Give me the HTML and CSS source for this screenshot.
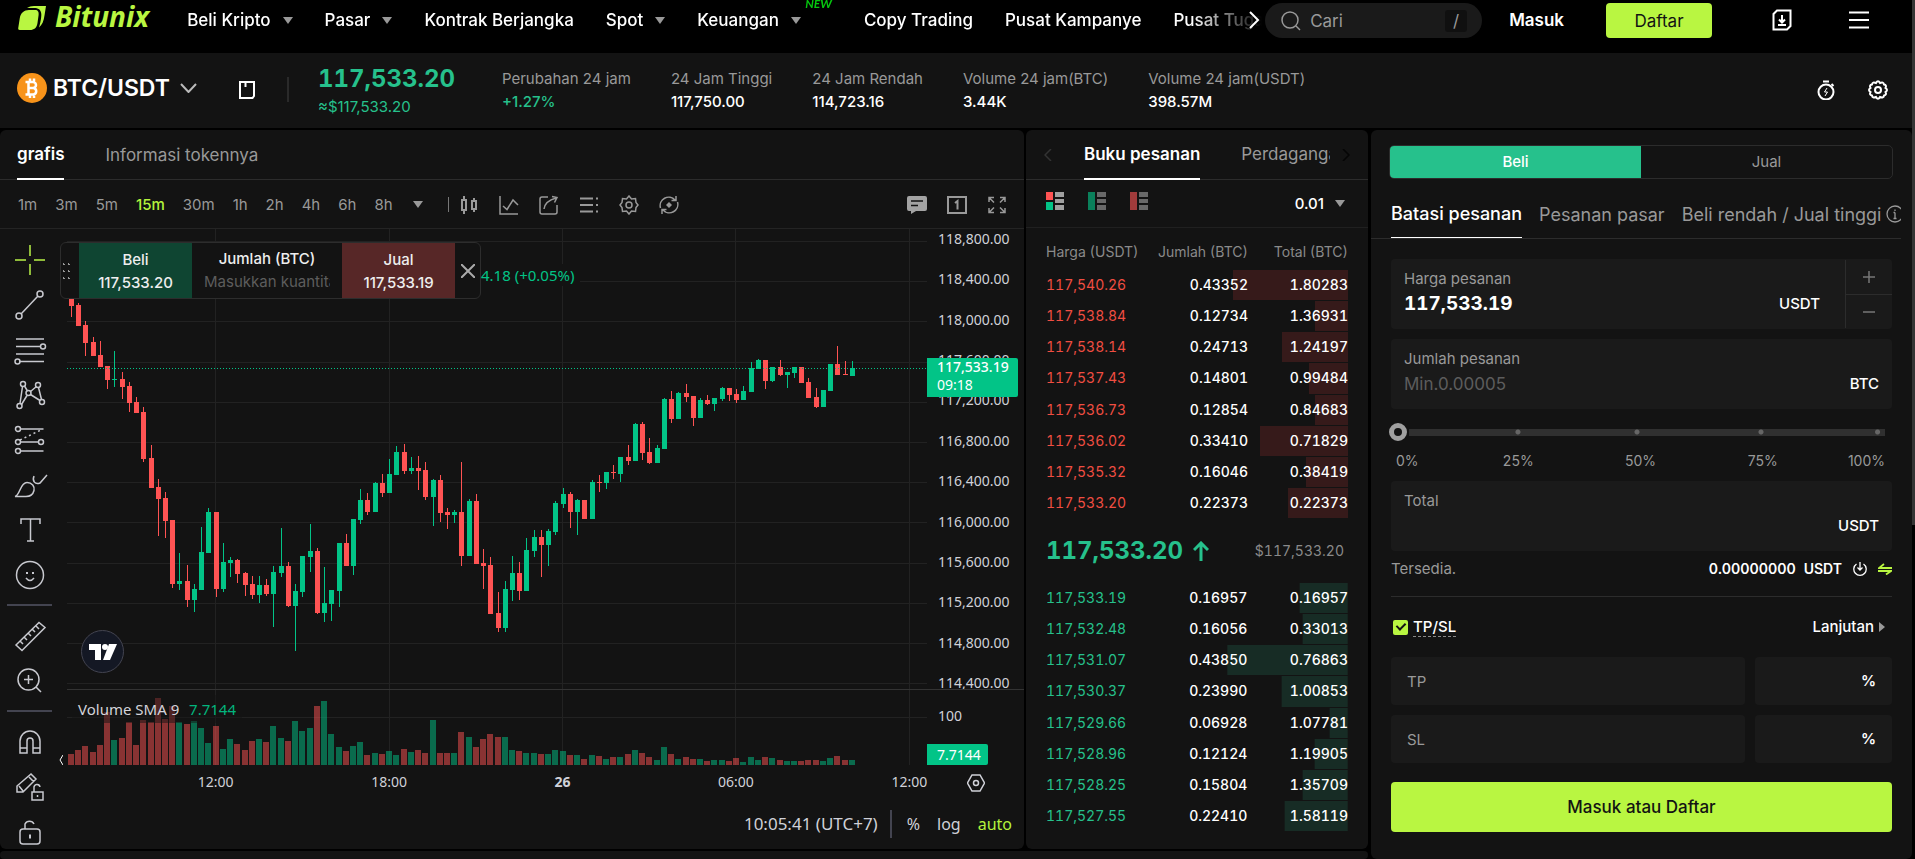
FILE: index.html
```html
<!DOCTYPE html>
<html lang="id">
<head>
<meta charset="utf-8">
<meta name="viewport" content="width=device-width, initial-scale=1">
<title>BTC/USDT | Bitunix</title>
<link rel="stylesheet" href="styles.css">
</head>
<body>
<header class="topbar">
  <a class="brand" href="#">
    <svg class="brand-mark" viewBox="0 0 28 24" width="28" height="24"><path d="M2 24C0 24 0 23 .4 21L1.800 12C2.600 7 6 4 11 4H17C20 4 21 6 20.600 9L19.500 17C18.700 22 16 24 12 24Z"/><path d="M9 2C11 .7 13 0 16 0H28L26.500 9.500C25.800 15 24 19 21 21.500C22.300 18 23.500 11 23.300 8C23 3.500 20 2 16 2Z"/></svg>
    <span>Bitunix</span>
  </a>
  <nav class="nav">
    <a href="#">Beli Kripto <i class="caret"></i></a>
    <a href="#">Pasar <i class="caret"></i></a>
    <a href="#">Kontrak Berjangka</a>
    <a href="#">Spot <i class="caret"></i></a>
    <a href="#" class="has-new">Keuangan <i class="caret"></i><em class="new">NEW</em></a>
    <a href="#">Copy Trading</a>
    <a href="#">Pusat Kampanye</a>
    <a href="#">Pusat Tugas</a>
  </nav>
  <button class="nav-next" aria-label="Berikutnya"><svg viewBox="0 0 12 18" width="12" height="18"><path d="M2 1l8 8-8 8"/></svg></button>
  <label class="search">
    <svg viewBox="0 0 20 20" width="20" height="20"><circle cx="9" cy="9" r="8"/><path d="M15 15l4 4"/></svg>
    <input type="text" placeholder="Cari" aria-label="Cari">
    <kbd>/</kbd>
  </label>
  <a class="login" href="#">Masuk</a>
  <button class="signup">Daftar</button>
  <button class="icon-btn app-btn" aria-label="Unduh aplikasi"><svg viewBox="0 0 20 22" width="20" height="22"><path class="heavy" d="M5 1.500H18.500V17L15 20.500H1.500V5Z"/><path class="heavy" d="M10 6v7M7 10.500l3 3 3-3M6 16h8"/></svg></button>
  <button class="icon-btn menu-btn" aria-label="Menu"><svg viewBox="0 0 20 18" width="20" height="18"><path class="heavy" d="M0 1.500h20M0 9h20M0 16.500h20"/></svg></button>
</header>

<section class="ticker">
  <button class="pair">
    <svg viewBox="0 0 30 30" width="30" height="30"><circle cx="15" cy="15" r="15" fill="#f7931a"/><path fill="none" stroke="#fff" stroke-width="2.500" d="M8.500 9H16a3 3 0 0 1 0 6H11.500 16.500a3.300 3.300 0 0 1 0 6.500H8.500M11.500 9v12.500M13 5.500V9M17 5.500V9M13 21.500V25M17 21.500V25"/></svg>
    <strong>BTC/USDT</strong>
    <svg class="chev" viewBox="0 0 17 10" width="17" height="10"><path d="M1 1l7.500 8L16 1"/></svg>
  </button>
  <button class="icon-btn guide" aria-label="Panduan"><svg viewBox="0 0 16 18" width="16" height="18"><path class="heavy" d="M1 1H15V15L13.500 17H1ZM6.500 1V6"/></svg></button>
  <div class="last">
    <b>117,533.20</b>
    <span>≈$117,533.20</span>
  </div>
  <dl class="stats">
    <div><dt>Perubahan 24 jam</dt><dd class="up">+1.27%</dd></div>
    <div><dt>24 Jam Tinggi</dt><dd>117,750.00</dd></div>
    <div><dt>24 Jam Rendah</dt><dd>114,723.16</dd></div>
    <div><dt>Volume 24 jam(BTC)</dt><dd>3.44K</dd></div>
    <div><dt>Volume 24 jam(USDT)</dt><dd>398.57M</dd></div>
  </dl>
  <div class="ticker-tools">
    <button class="icon-btn" aria-label="Waktu"><svg viewBox="0 0 20 20" width="20" height="20"><circle class="heavy" cx="10" cy="12" r="7.500"/><path class="heavy" d="M7 1.500h6M15.500 4l2 2"/><path d="M11 8l-2.500 4h3L9 16"/></svg></button>
    <button class="icon-btn" aria-label="Pengaturan"><svg viewBox="0 0 20 20" width="20" height="20"><path class="heavy" d="M8 3q2-3.500 4 0q3.500-1.500 4 1.500q3 .5 1.500 3.500q3 2 0 4q1.500 3-1.500 3.500q-.5 3-4 1.500q-2 3.500-4 0q-3.500 1.500-4-1.500q-3-.5-1.500-3.500q-3-2 0-4q-1.500-3 1.500-3.500q.5-3 4-1.500Z"/><circle class="heavy" cx="10" cy="10" r="3"/></svg></button>
  </div>
</section>

<main class="desk">
  <div class="left">
    <section class="panel chart">
      <div class="tabs chart-tabs"><button class="tab on">grafis</button><button class="tab">Informasi tokennya</button></div>
      <div class="chart-bar">
        <div class="frames">
          <button>1m</button><button>3m</button><button>5m</button><button class="on">15m</button><button>30m</button><button>1h</button><button>2h</button><button>4h</button><button>6h</button><button>8h</button>
        </div>
        <i class="caret"></i>
        <i class="rule"></i>
        <div class="tools">
          <button aria-label="Jenis grafik"><svg viewBox="0 0 20 20" width="20" height="20"><path class="thick" d="M5 1v4M5 15v4M15 3v3M15 14v3M3 5h4v10H3zM13 6h4v8h-4z"/></svg></button>
          <button aria-label="Indikator"><svg viewBox="0 0 20 20" width="20" height="20"><path d="M1 1v18h18M4 11l4 3.500 6-9.500 5 5"/></svg></button>
          <button aria-label="Bagikan"><svg viewBox="0 0 20 20" width="20" height="20"><path d="M9 2H3q-2 0-2 2v13q0 2 2 2h13q2 0 2-2v-7M5 14Q6 6 17 3M13 1.500l5 1-2.500 5"/></svg></button>
          <button aria-label="Daftar indikator"><svg viewBox="0 0 20 20" width="20" height="20"><path class="thick" d="M1 3.500h13M1 10h13M1 16.500h13M17 3.500h2M17 10h2M17 16.500h2"/></svg></button>
          <button aria-label="Setelan grafik"><svg viewBox="0 0 20 20" width="20" height="20"><path d="M10 1l2.500 3 4-.5 .5 4 2 2.500-2 2.500-.5 4-4-.5L10 19l-2.500-3-4 .5-.5-4L1 10l2-2.500.5-4 4 .5Z"/><circle cx="10" cy="10" r="3"/></svg></button>
          <button aria-label="Muat ulang"><svg viewBox="0 0 20 20" width="20" height="20"><path d="M1.500 13A8.500 8.500 0 0 1 16 5M17 1v4.500h-4.500M18.500 7A8.500 8.500 0 0 1 4 15M3 19v-4.500h4.500"/><path fill="currentColor" stroke="none" d="M10 7l3 3-3 3L7 10Z"/></svg></button>
        </div>
        <div class="tools end">
          <button aria-label="Komentar"><svg viewBox="0 0 20 20" width="20" height="20"><path class="bubble" d="M2 1h16q2 0 2 2v11q0 2-2 2H9l-5 3v-3H2q-2 0-2-2V3q0-2 2-2Z"/><path class="bubble-text" d="M4 6h12M4 10.500h7"/></svg></button>
          <button aria-label="Tata letak"><svg viewBox="0 0 20 20" width="20" height="20"><path class="thick" d="M1 8V2h18v6M1 12v6h18v-6M1 7v6M19 7v6M8 8l2.500-2v8.500"/></svg></button>
          <button aria-label="Layar penuh"><svg viewBox="0 0 20 20" width="20" height="20"><path d="M2 7V2.500h5M13 2.500h5V7M18 13v4.500h-5M7 17.500H2V13M2 2.500l5 5M18 2.500l-5 5M18 17.500l-5-5M2 17.500l5-5"/></svg></button>
        </div>
      </div>
      <div class="chart-body">
        <div class="draw">
          <button class="on" aria-label="Kursor"><svg viewBox="0 0 30 30" width="30" height="30"><path class="thick" d="M15 0v11M15 19v11M0 15h11M19 15h11"/></svg></button>
          <button aria-label="Garis"><svg viewBox="0 0 30 30" width="30" height="30"><circle cx="4" cy="26" r="3"/><circle cx="25" cy="4" r="3"/><path d="M6 24L23 6"/></svg></button>
          <button aria-label="Fibonacci"><svg viewBox="0 0 30 30" width="30" height="30"><path d="M1 4h28M1 11.500h24M1 19h28M4 26.500h25"/><circle cx="28" cy="11.500" r="2.500"/><circle cx="2.500" cy="26.500" r="2.500"/></svg></button>
          <button aria-label="Pola"><svg viewBox="0 0 30 30" width="30" height="30"><path d="M5 23.500L7.500 6.500M9.500 6l3 5M15.500 11.500l6-5M23.500 7.500l3 12M6.500 24.500l5.500-9M15.500 14.500l9.500 6"/><circle cx="4.500" cy="26" r="2.500"/><circle cx="8" cy="4" r="2.500"/><circle cx="13.500" cy="13" r="2.500"/><circle cx="23" cy="5" r="2.500"/><circle cx="27" cy="22" r="2.500"/></svg></button>
          <button aria-label="Proyeksi"><svg viewBox="0 0 30 30" width="30" height="30"><path d="M5.500 4h23M5.500 17h18M5.500 26h23"/><path stroke-dasharray="2 3" d="M5 15L26 5"/><circle cx="3" cy="4" r="2.500"/><circle cx="3" cy="17" r="2.500"/><circle cx="26" cy="17" r="2.500"/><circle cx="3" cy="26" r="2.500"/></svg></button>
          <button aria-label="Kuas"><svg viewBox="0 0 30 30" width="30" height="30"><path d="M0 26.500c5-1 5-14 12-14 5 0 8 4 7 8-1 4-4 6-8 6ZM19 6c-2 5 1 9 6 7l7-8"/></svg></button>
          <button aria-label="Teks"><svg viewBox="0 0 30 30" width="30" height="30"><path d="M6 9V4h19v5M15.500 4v22M12 26h7"/></svg></button>
          <button aria-label="Emoji"><svg viewBox="0 0 30 30" width="30" height="30"><circle cx="15" cy="15" r="13.500"/><path d="M11 18q4 5 8 0"/><path class="thick" d="M11 13h2M17 13h2"/></svg></button>
          <hr>
          <button aria-label="Penggaris"><svg viewBox="0 0 30 30" width="30" height="30"><path d="M1 24L24 1.500l6 5L7 29.500ZM5 20l3 3M9 16l3 3M13 12l3 3M17 8l3 3M21 5l3 3"/></svg></button>
          <button aria-label="Perbesar"><svg viewBox="0 0 30 30" width="30" height="30"><circle cx="13.500" cy="13.500" r="10.500"/><path d="M21 21l5 5M9 13.500h9M13.500 9v9"/></svg></button>
          <hr>
          <button aria-label="Magnet"><svg viewBox="0 0 30 30" width="30" height="30"><path d="M5 26V14a10 10 0 0 1 20 0V26H18V14a3 3 0 0 0-6 0V26ZM5 21h7M18 21h7"/></svg></button>
          <button aria-label="Mode gambar"><svg viewBox="0 0 30 30" width="30" height="30"><path d="M2 20v-6L16 2l5 5L8 20ZM4 14l4 5M14 5l5 5M17 20h11v8H17ZM19 20v-4a3 3 0 0 1 6-1M22.500 23v2"/></svg></button>
          <button aria-label="Kunci"><svg viewBox="0 0 30 30" width="30" height="30"><rect x="5" y="12" width="20" height="15" rx="3"/><path d="M10 12V7a5 5 0 0 1 9 0"/><path class="thick" d="M15 17.500v4"/></svg></button>
        </div>
        <div class="plot-area">
          <svg class="plot" id="plot" viewBox="0 0 860 1608" preserveAspectRatio="none"></svg>
          <form class="quick">
            <i class="grip"></i>
            <button type="button" class="q-buy">Beli<br>117,533.20</button>
            <label class="q-qty">Jumlah (BTC)<input type="text" placeholder="Masukkan kuantitas"></label>
            <button type="button" class="q-sell">Jual<br>117,533.19</button>
            <button type="button" class="q-close" aria-label="Tutup"><svg viewBox="0 0 14 14" width="14" height="14"><path d="M0 0l14 14M14 0L0 14"/></svg></button>
          </form>
          <span class="change">4.18 (+0.05%)</span>
          <a class="tv" href="#" aria-label="TradingView"><svg viewBox="0 0 28 16" width="28" height="16"><path d="M0 0h12v16H6V6H0ZM20 0h8l-7 16h-7Z"/><circle cx="16" cy="3" r="3"/></svg></a>
          <div class="vol-legend">Volume SMA 9 <span>7.7144</span></div>
          <svg class="fold" viewBox="0 0 4 10" width="4" height="10"><path d="M4 0L1 5l3 5"/></svg>
        </div>
        <div class="prices">
          <ul><li>118,800.00</li><li>118,400.00</li><li>118,000.00</li><li>117,600.00</li><li>117,200.00</li><li>116,800.00</li><li>116,400.00</li><li>116,000.00</li><li>115,600.00</li><li>115,200.00</li><li>114,800.00</li><li>114,400.00</li></ul>
          <div class="vol-scale">100</div>
          <div class="price-tag"><b>117,533.19</b><span>09:18</span></div>
          <div class="vol-tag">7.7144</div>
        </div>
      </div>
      <div class="times">
        <span>12:00</span><span>18:00</span><b>26</b><span>06:00</span><span>12:00</span>
        <svg class="axis-gear" viewBox="0 0 18 18" width="18" height="18"><path d="M5 1h8l4.500 8L13 17H5L.5 9Z"/><circle cx="9" cy="9" r="2.500"/></svg>
      </div>
      <div class="chart-foot">
        <span>10:05:41 (UTC+7)</span><i></i><button>%</button><button>log</button><button class="on">auto</button>
      </div>
    </section>

    <section class="panel book">
      <div class="tabs book-tabs">
        <svg class="arrow dim" viewBox="0 0 8 12" width="8" height="12"><path d="M7 0L1 6l6 6"/></svg>
        <button class="tab on">Buku pesanan</button>
        <button class="tab cut">Perdagangan</button>
        <svg class="arrow" viewBox="0 0 8 12" width="8" height="12"><path d="M1 0l6 6-6 6"/></svg>
      </div>
      <div class="book-bar">
        <button aria-label="Semua"><svg viewBox="0 0 18 18" width="18" height="18"><path fill="#ff5353" d="M0 0h7v8H0z"/><path fill="#02c487" d="M0 10h7v8H0z"/><path fill="#a0a0a0" d="M9 0h9v5H9zM9 7h9v4H9zM9 13h9v5H9z"/></svg></button>
        <button aria-label="Beli"><svg viewBox="0 0 18 18" width="18" height="18"><path fill="#0a805b" d="M0 0h7v18H0z"/><path fill="#696969" d="M9 0h9v5H9zM9 7h9v4H9zM9 13h9v5H9z"/></svg></button>
        <button aria-label="Jual"><svg viewBox="0 0 18 18" width="18" height="18"><path fill="#a13b3b" d="M0 0h7v18H0z"/><path fill="#696969" d="M9 0h9v5H9zM9 7h9v4H9zM9 13h9v5H9z"/></svg></button>
        <button class="step">0.01 <i class="caret"></i></button>
      </div>
      <table class="orders asks">
        <thead><tr><th>Harga (USDT)</th><th>Jumlah (BTC)</th><th>Total (BTC)</th></tr></thead>
        <tbody>
          <tr style="--depth:38%"><td>117,540.26</td><td>0.43352</td><td>1.80283</td></tr>
          <tr style="--depth:11%"><td>117,538.84</td><td>0.12734</td><td>1.36931</td></tr>
          <tr style="--depth:22%"><td>117,538.14</td><td>0.24713</td><td>1.24197</td></tr>
          <tr style="--depth:13%"><td>117,537.43</td><td>0.14801</td><td>0.99484</td></tr>
          <tr style="--depth:11%"><td>117,536.73</td><td>0.12854</td><td>0.84683</td></tr>
          <tr style="--depth:29%"><td>117,536.02</td><td>0.33410</td><td>0.71829</td></tr>
          <tr style="--depth:14%"><td>117,535.32</td><td>0.16046</td><td>0.38419</td></tr>
          <tr style="--depth:20%"><td>117,533.20</td><td>0.22373</td><td>0.22373</td></tr>
        </tbody>
      </table>
      <div class="mid"><b>117,533.20</b><svg viewBox="0 0 16 20" width="16" height="20"><path d="M8 20V2M1 9l7-7 7 7"/></svg><span>$117,533.20</span></div>
      <table class="orders bids">
        <tbody>
          <tr style="--depth:16%"><td>117,533.19</td><td>0.16957</td><td>0.16957</td></tr>
          <tr style="--depth:15%"><td>117,532.48</td><td>0.16056</td><td>0.33013</td></tr>
          <tr style="--depth:40%"><td>117,531.07</td><td>0.43850</td><td>0.76863</td></tr>
          <tr style="--depth:22%"><td>117,530.37</td><td>0.23990</td><td>1.00853</td></tr>
          <tr style="--depth:6%"><td>117,529.66</td><td>0.06928</td><td>1.07781</td></tr>
          <tr style="--depth:11%"><td>117,528.96</td><td>0.12124</td><td>1.19905</td></tr>
          <tr style="--depth:15%"><td>117,528.25</td><td>0.15804</td><td>1.35709</td></tr>
          <tr style="--depth:21%"><td>117,527.55</td><td>0.22410</td><td>1.58119</td></tr>
        </tbody>
      </table>
    </section>
    <section class="panel history"></section>
  </div>

  <form class="panel trade">
    <div class="side"><button type="button" class="on">Beli</button><button type="button">Jual</button></div>
    <div class="tabs type-tabs">
      <button type="button" class="tab on">Batasi pesanan</button><button type="button" class="tab">Pesanan pasar</button><button type="button" class="tab">Beli rendah / Jual tinggi</button>
      <svg viewBox="0 0 18 18" width="18" height="18"><circle cx="9" cy="9" r="8"/><path d="M9 4.500v1.500M9 7.500v6M7.500 13.500h3M7.500 7.500H9"/></svg>
    </div>
    <div class="field">
      <label for="price">Harga pesanan</label>
      <div class="line"><input id="price" class="big" type="text" value="117,533.19"><span>USDT</span></div>
      <div class="stepper"><button type="button" aria-label="Tambah"><svg viewBox="0 0 12 12" width="12" height="12"><path d="M6 0v12M0 6h12"/></svg></button><button type="button" aria-label="Kurangi"><svg viewBox="0 0 12 12" width="12" height="12"><path d="M0 6h12"/></svg></button></div>
    </div>
    <div class="field">
      <label for="qty">Jumlah pesanan</label>
      <div class="line"><input id="qty" type="text" placeholder="Min.0.00005"><span>BTC</span></div>
    </div>
    <div class="slide">
      <input type="range" min="0" max="100" value="0" aria-label="Persentase">
      <div class="marks"><span>0%</span><span>25%</span><span>50%</span><span>75%</span><span>100%</span></div>
    </div>
    <div class="field">
      <label for="total">Total</label>
      <div class="line"><input id="total" type="text"><span>USDT</span></div>
    </div>
    <div class="avail">
      <span>Tersedia.</span>
      <b>0.00000000</b><b>USDT</b>
      <svg viewBox="0 0 14 14" width="14" height="14"><path d="M3.500 2A6.200 6.200 0 1 0 10.500 2M7 0v8M4.500 5.500L7 8l2.500-2.500"/></svg>
      <svg class="swap" viewBox="0 0 14 12" width="14" height="12"><path d="M14 5H1L6 1M0 8h13L8 11.500"/></svg>
    </div>
    <div class="tpsl">
      <label><input type="checkbox" checked><span>TP/SL</span></label>
      <button type="button">Lanjutan <i></i></button>
    </div>
    <div class="pairline"><input class="box" type="text" placeholder="TP" aria-label="TP"><label class="box pct"><input type="text" aria-label="TP persen">%</label></div>
    <div class="pairline"><input class="box" type="text" placeholder="SL" aria-label="SL"><label class="box pct"><input type="text" aria-label="SL persen">%</label></div>
    <button type="button" class="submit">Masuk atau Daftar</button>
  </form>
</main>
<div class="scroll-thumb"></div>
<script src="chart.js"></script>
</body>
</html>
```
FILE: styles.css
```css
* { box-sizing: border-box; }
body {
  margin: 0;
  height: 100vh;
  overflow: hidden;
  display: flex;
  flex-direction: column;
  background: #000;
  color: #fff;
  font: 400 14px/20px Inter, "Liberation Sans", sans-serif;
}
button, input { font: inherit; color: inherit; border: 0; background: none; padding: 0; margin: 0; outline: 0; }
button { cursor: pointer; white-space: nowrap; }
a { color: inherit; text-decoration: none; }
svg { display: block; flex: none; fill: none; stroke: currentColor; }
ul, dl, dd { margin: 0; padding: 0; list-style: none; }
.caret { display: inline-block; border: 5px solid transparent; border-top: 7px solid #999; border-bottom: 0; }
.heavy, .thick { stroke-width: 2; }
.icon-btn { display: flex; }

/* top bar */
.topbar { flex: none; height: 53px; display: flex; align-items: flex-start; padding: 3px 46px 0 18px; }
.brand { display: flex; align-items: center; gap: 9px; margin: -2px 38px 0 0; color: #b9f641; font: italic 700 28px/30px "Open Sans", sans-serif; }
.brand-mark { fill: #b9f641; stroke: none; margin-top: 3px; }
.nav {
  flex: 1; min-width: 0; display: flex; gap: 32px; height: 50px; margin-top: -3px; padding-top: 3px; overflow: hidden;
  font-size: 17px; font-weight: 500; line-height: 34px; white-space: nowrap;
  -webkit-mask-image: linear-gradient(to left, transparent, #000 70px);
  mask-image: linear-gradient(to left, transparent, #000 70px);
}
.nav a { display: flex; align-items: center; gap: 12px; height: 34px; position: relative; }
.has-new { padding-right: 31px; }
.new { position: absolute; right: 0; top: -5px; color: #05c70e; font: italic 700 12px/12px Lato, sans-serif; }
.nav-next { margin: 8px 5px 0 -14px; z-index: 1; }
.nav-next svg { stroke-width: 2; }
.search { width: 217px; height: 35px; display: flex; align-items: center; gap: 9px; padding: 0 15px 0 16px; border-radius: 18px; background: #1a1a1a; color: #999; font-size: 17px; }
.search input { flex: 1; min-width: 0; }
.search svg { stroke-width: 1.5; }
::placeholder { color: #999; opacity: 1; }
.search kbd { width: 22px; border-radius: 3px; background: #101010; text-align: center; font: 17px/22px Inter, sans-serif; }
.login { margin-left: 27px; font-size: 17px; font-weight: 600; line-height: 34px; }
.signup { width: 106px; height: 35px; margin-left: 42px; border-radius: 4px; background: #b9f641; color: #131313; font-size: 17px; }
.app-btn { margin: 6px 0 0 60px; }
.menu-btn { margin: 8px 0 0 57px; }

/* ticker */
.ticker { flex: none; height: 75px; margin-right: 3px; background: #131313; display: flex; align-items: center; padding: 0 24px 0 17px; }
.pair { display: flex; align-items: center; gap: 6px; margin-bottom: 6px; }
.pair > svg:first-child { stroke: none; }
.pair strong { font-size: 23px; font-weight: 600; line-height: 30px; }
.chev { margin-left: 4px; stroke-width: 2; color: #bbb; }
.guide { margin: 0 0 2px 42px; padding-right: 32px; }
.last { display: flex; flex-direction: column; padding-left: 31px; color: #26c18c; position: relative; }
.last::before { content: ""; position: absolute; left: 0; top: 14px; width: 2px; height: 25px; background: #2a2a2a; }
.last b, .mid b { font-size: 24px; line-height: 32px; font-weight: 700; font-variant-numeric: tabular-nums; }
.last span { font-size: 15px; line-height: 23px; }
.stats { display: flex; gap: 40px; margin-left: 47px; padding-bottom: 2px; white-space: nowrap; }
.stats dt { color: #999; font-size: 15px; line-height: 23px; }
.stats dd { font-size: 15px; line-height: 23px; font-weight: 500; }
.stats .up { color: #26c18c; }
.ticker-tools { display: flex; gap: 32px; margin: 0 0 1px auto; }

/* layout */
.desk { flex: 1; min-height: 0; display: grid; grid-template-columns: minmax(0, 1fr) 541px; gap: 3px; margin: 2px 3px 0 0; }
.left { display: grid; grid-template: 719px 1fr / minmax(0, 1fr) 342px; gap: 2px; min-height: 0; }
.panel { background: #131313; border-radius: 6px; min-width: 0; }
.history { grid-column: 1 / -1; }
.tabs { display: flex; border-bottom: 1px solid #2c2c2c; height: 50px; font-size: 17px; }
.tab { height: 50px; color: #999; padding-bottom: 1px; }
.tab.on { color: #fff; font-weight: 600; padding-bottom: 0; border-bottom: 2px solid #fff; }

/* chart */
.chart { display: flex; flex-direction: column; overflow: hidden; }
.chart-tabs { flex: none; gap: 41px; padding-left: 17px; }
.chart-bar { flex: none; height: 49px; display: flex; align-items: center; padding: 1px 17px 0 18px; border-bottom: 1px solid #242424; color: #999; font-size: 15px; }
.frames { display: flex; gap: 18px; }
.frames .on, .chart-foot .on { color: #b4f23c; }
.frames .on { font-weight: 500; }
.chart-bar > .caret { margin-left: 20px; }
.rule { width: 1px; height: 15px; background: #777; margin: 0 10px 0 25px; }
.tools { display: flex; gap: 20px; }
.tools.end { margin-left: auto; }
.tools svg { stroke-width: 1.5; }
.bubble { fill: #a3a3a3; stroke: none; }
.bubble-text { stroke: #131313; }
.chart-body { flex: none; display: grid; grid-template: 536px / 67px minmax(0, 1fr) 97px; font-family: "Noto Sans", sans-serif; }
.draw { padding: 8px 0 0 7px; width: 53px; display: flex; flex-direction: column; color: #c8c9cf; }
.draw button { flex: none; height: 45px; display: flex; align-items: center; justify-content: center; }
.draw svg { stroke-width: 1.5; overflow: visible; }
.draw .on { color: #8fbb3a; }
.draw hr { flex: none; width: 45px; margin: 7px 0; border: 0; border-top: 2px solid #434450; }
.plot-area { position: relative; min-width: 0; }
.plot { width: 100%; height: 536px; shape-rendering: crispEdges; stroke: none; }
.plot .grid { fill: #222; }
.plot .up { fill: #02c487; }
.plot .down { fill: #ff5353; }
.plot .vol { opacity: .5; }
.plot .sep { fill: #333; }
.plot .now { stroke: #02c487; stroke-dasharray: 1 2; stroke-width: 3; }
.quick { position: absolute; left: -7px; top: 13px; height: 57px; display: flex; border: 1px solid #2d2d2d; border-radius: 6px; background: #131313; overflow: hidden; font: 500 15px/23px Inter, sans-serif; color: #eee; }
.grip { width: 10px; height: 21px; margin: 18px 8px 0 0; background: radial-gradient(circle, #999 1px, transparent 1px) 0 0 / 5px 7px; }
.q-buy, .q-sell { width: 113px; background: #0f4532; }
.q-sell { background: #572727; }
.q-qty { width: 150px; padding: 4px 12px; text-align: center; }
.q-qty input { width: 100%; display: block; font-weight: 400; }
.q-qty ::placeholder { color: #5d5d5d; }
.q-close { width: 25px; display: flex; align-items: center; justify-content: center; color: #aaa; }
.q-close svg { stroke-width: 2; }
.change { position: absolute; left: 414px; top: 35px; padding-right: 6px; background: #131313; color: #02c487; font-size: 15px; line-height: 22px; }
.tv { position: absolute; left: 14px; bottom: 92px; width: 43px; height: 43px; border: 1px solid #434450; border-radius: 50%; background: #141824; display: grid; place-items: center; }
.tv svg { fill: #fff; stroke: none; }
.vol-legend { position: absolute; left: 5px; top: 466px; padding: 3px 6px; background: rgba(19, 19, 19, .5); color: #d4d4da; font-size: 15px; line-height: 22px; }
.vol-legend span { color: #02b57d; margin-left: 6px; }
.fold { position: absolute; left: -8px; bottom: 0; }
.prices { position: relative; font-size: 14px; line-height: 20px; color: #d0d1d8; }
.prices ul { height: 460px; display: flex; flex-direction: column; justify-content: space-between; padding-left: 11px; overflow: hidden; }
.prices li { flex: none; height: 20px; }
.prices ul li:last-child { margin-bottom: -4px; }
.vol-scale { border-top: 1px solid #333; padding: 16px 0 0 11px; }
.price-tag, .vol-tag { position: absolute; left: 0; background: #02c487; color: #fff; padding-left: 10px; border-radius: 0 2px 2px 0; }
.price-tag { top: 129px; width: 91px; height: 39px; line-height: 18px; }
.price-tag b { display: block; font-weight: 500; }
.vol-tag { bottom: 0; width: 61px; line-height: 21px; }
.times { flex: none; position: relative; display: grid; grid-template-columns: repeat(5, 1fr); margin: 0 28px 0 129px; padding-top: 7px; text-align: center; font: 14px/20px "Noto Sans", sans-serif; color: #d0d1d8; }
.axis-gear { position: absolute; right: 11px; top: 9px; stroke-width: 1.5; }
.chart-foot { margin-top: auto; align-self: flex-end; display: flex; align-items: center; height: 28px; margin-bottom: 11px; padding-right: 12px; gap: 17px; font: 16px/28px "Noto Sans", sans-serif; color: #d0d1d8; }
.chart-foot span { font-size: 17px; }
.chart-foot i { width: 2px; height: 28px; background: #434450; margin: 0 -2px 0 -5px; }

/* order book */
.book { overflow: hidden; }
.book-tabs { padding: 0 18px; align-items: center; }
.book-tabs .arrow { stroke-width: 1.5; color: #050505; }
.book-tabs .dim { color: #333; }
.book-tabs .on { margin-left: 32px; }
.book-tabs .cut { flex: 1; min-width: 0; margin: 0 12px 0 41px; overflow: hidden; text-align: left; }
.book-bar { height: 48px; display: flex; gap: 24px; align-items: center; padding: 0 23px 0 20px; border-bottom: 1px solid #202020; }
.book-bar svg { stroke: none; margin-bottom: 5px; }
.step { margin-left: auto; font-size: 15px; font-weight: 500; display: flex; align-items: center; gap: 11px; }
.orders { width: 302px; margin: 0 20px; table-layout: fixed; border-collapse: separate; border-spacing: 0 1px; font-size: 14px; line-height: 20px; font-variant-numeric: tabular-nums; }
.orders th { padding: 5px 0 0; height: 40px; font-weight: 400; text-align: right; color: #8a8a8a; white-space: nowrap; }
.orders th:nth-child(1) { width: 102px; }
.orders th:nth-child(2), .orders th:nth-child(3) { width: 100px; }
.orders td { padding: 0; height: 30px; text-align: right; font-weight: 500; }
.orders th:first-child, .orders td:first-child { text-align: left; font-weight: 400; }
.asks { height: 291px; }
.bids { height: 250px; }
.asks td:first-child { color: #f04e42; }
.bids td:first-child { color: #26c18c; }
.asks tbody tr { background: linear-gradient(to left, #361a1a var(--depth), transparent 0); }
.bids tbody tr { background: linear-gradient(to left, #172c25 var(--depth), transparent 0); }
.mid { height: 63px; display: flex; align-items: center; padding: 0 24px 0 20px; color: #26c18c; }
.mid svg { stroke-width: 3; margin-left: 10px; }
.mid span { margin-left: auto; color: #8a8a8a; font-size: 14px; font-variant-numeric: tabular-nums; }

/* trade form */
.trade { padding: 15px 20px 0; overflow: hidden; }
.side { display: grid; grid-template-columns: 1fr 1fr; height: 34px; border: 1px solid #2c2c2c; border-radius: 5px; overflow: hidden; font-size: 15px; color: #999; margin: 0 -1px 0 -2px; }
.side .on { background: #26c18c; color: #fff; font-weight: 500; }
.type-tabs { gap: 17px; margin: 9px -9px 20px -20px; padding-left: 20px; height: 51px; font-size: 18px; overflow: hidden; align-items: center; color: #999; }
.type-tabs .tab { height: 51px; padding-top: 4px; }
.type-tabs .tab.on { font-weight: 500; }
.type-tabs svg { margin: 4px 0 2px -12px; stroke-width: 1.3; }
.field { position: relative; height: 70px; margin-bottom: 10px; padding: 8px 13px 0; border-radius: 4px; background: #1a1a1a; }
.field label { display: block; color: #999; font-size: 15px; line-height: 24px; }
.line { display: flex; align-items: center; line-height: 26px; font-size: 15px; font-weight: 500; }
.line input { flex: 1; min-width: 0; height: 26px; font-size: 17px; font-weight: 400; }
.line .big { font-size: 19px; font-weight: 700; font-variant-numeric: tabular-nums; }
.line ::placeholder { color: #5d5d5d; }
.stepper { position: absolute; right: 0; top: 1px; bottom: 1px; width: 47px; border-left: 1px solid #2c2c2c; display: grid; grid-template-rows: 1fr 1fr; color: #777; }
.field:has(.stepper) { padding-right: 72px; }
.stepper button { display: grid; place-items: center; }
.stepper button + button { border-top: 1px solid #2c2c2c; }
.stepper svg { stroke-width: 1.5; }
.slide { padding-top: 3px; height: 62px; margin: 0 7px 0 -2px; }
.slide > input {
  display: block; width: 100%; height: 20px; appearance: none; cursor: pointer;
  background:
    radial-gradient(circle at 26% 10px, #666 2px, transparent 3px),
    radial-gradient(circle at 50% 10px, #666 2px, transparent 3px),
    radial-gradient(circle at 75% 10px, #666 2px, transparent 3px),
    radial-gradient(circle at 98.500% 10px, #666 2px, transparent 3px),
    linear-gradient(#303030, #303030) 20px 7px / 100% 7px no-repeat;
}
.slide > input::-webkit-slider-thumb { appearance: none; width: 18px; height: 18px; border: 5px solid #a0a0a0; border-radius: 50%; background: #131313; }
.marks { display: grid; grid-template-columns: 1fr 2fr 2fr 2fr 1fr; color: #999; font-size: 14px; line-height: 20px; margin: 9px 0 0 7px; text-align: center; }
.marks span:first-child { text-align: left; }
.marks span:last-child { text-align: right; }
.avail { display: flex; align-items: center; height: 46px; margin-top: -10px; padding-bottom: 9px; border-bottom: 1px solid #2c2c2c; gap: 8px; font-size: 15px; color: #fff; }
.avail span { margin-right: auto; color: #999; }
.avail b { font-weight: 600; font-size: 14px; }
.avail svg { margin-left: 3px; stroke-width: 1.3; }
.avail .swap { color: #b9f641; stroke-width: 1.8; }
.tpsl { display: flex; justify-content: space-between; align-items: center; height: 60px; padding: 0 7px 0 2px; font-size: 15px; font-weight: 500; }
.tpsl label { display: flex; align-items: center; gap: 5px; }
.tpsl label span { border-bottom: 1px dashed #888; line-height: 18px; }
.tpsl input { appearance: none; width: 15px; height: 15px; border-radius: 2px; background: #b9f641; display: grid; place-items: center; }
.tpsl input:checked::after { content: ""; width: 4px; height: 7px; margin-bottom: 3px; border: solid #131313; border-width: 0 2px 2px 0; transform: rotate(45deg); }
.tpsl button { display: flex; align-items: center; gap: 5px; }
.tpsl i { border: 5px solid transparent; border-left: 6px solid #999; border-right: 0; }
.pairline { display: grid; grid-template-columns: minmax(0, 354fr) minmax(0, 137fr); gap: 10px; margin-bottom: 10px; }
.box { height: 48px; border-radius: 4px; background: #1a1a1a; padding: 0 16px; font-size: 15px; }
.pct { display: flex; align-items: center; font-weight: 600; }
.pct input { flex: 1; min-width: 0; }
.submit { display: block; width: 100%; height: 50px; margin-top: 19px; border-radius: 4px; background: #b9f641; color: #131313; font-size: 17px; font-weight: 500; }
.scroll-thumb { position: fixed; right: 0; top: 0; width: 3px; height: 525px; background: #353535; }
```
FILE: chart.js
```js
// Each candle: direction, high, body top, body bottom, low, volume top (chart units).
const candles = `
r 490 490 528 560 972|r 519 525 588 588 960|r 573 585 639 678 948|r 621 636 678 678 966|r 633 675 711 711 945
r 708 708 750 777 846|g 663 747 750 771 930|r 726 747 771 807 924|r 756 768 819 846 876|r 801 816 849 849 945
r 831 846 987 996 870|r 945 984 1074 1074 876|r 1047 1071 1107 1218 804|r 1086 1104 1173 1224 867|r 1170 1170 1362 1374 828
g 1269 1353 1362 1380 876|r 1305 1353 1410 1431 882|g 1362 1377 1410 1446 873|g 1191 1266 1380 1380 894|g 1134 1146 1269 1269 939
r 1146 1146 1377 1401 888|g 1239 1296 1377 1386 957|g 1281 1290 1299 1341 927|r 1287 1290 1332 1359 942|r 1326 1329 1365 1398 960
r 1338 1362 1395 1407 933|g 1338 1365 1395 1419 927|r 1347 1365 1392 1398 936|g 1308 1326 1392 1491 888|g 1194 1308 1329 1341 924
r 1296 1308 1428 1431 933|g 1362 1383 1428 1563 873|g 1278 1278 1386 1401 903|g 1182 1263 1281 1326 894|r 1254 1263 1449 1452 828
g 1311 1419 1449 1476 813|g 1380 1380 1422 1473 912|g 1239 1239 1383 1431 951|r 1212 1239 1308 1308 963|g 1167 1167 1308 1335 948
g 1077 1110 1170 1182 936|r 1089 1110 1146 1155 975|g 1056 1059 1146 1146 969|r 1032 1059 1089 1101 972|g 987 1032 1089 1089 963
g 948 966 1035 1035 975|r 942 966 1023 1032 957|g 981 1014 1023 1032 966|r 978 1014 1023 1080 960|r 996 1020 1101 1110 969
g 1047 1050 1101 1188 870|r 1035 1050 1149 1176 969|r 1134 1146 1155 1197 969|g 1140 1146 1155 1179 969|r 996 1146 1278 1308 906
g 1107 1113 1278 1278 921|r 1092 1113 1302 1302 951|r 1257 1299 1308 1377 927|r 1281 1305 1452 1452 912|r 1386 1449 1494 1506 921
g 1353 1377 1494 1506 921|g 1278 1329 1380 1413 960|r 1296 1329 1383 1410 963|g 1224 1260 1383 1383 969|g 1200 1221 1263 1281 969
r 1200 1221 1245 1341 972|g 1197 1203 1245 1308 972|g 1113 1119 1206 1215 960|g 1074 1092 1122 1134 963|r 1086 1092 1146 1194 975
g 1107 1110 1146 1215 975|r 1110 1110 1167 1167 987|g 1050 1056 1167 1167 975|r 1035 1056 1059 1086 978|g 1026 1026 1059 1077 987
r 1005 1026 1029 1047 981|g 981 981 1032 1056 981|r 945 981 993 1005 972|g 879 882 993 993 960|r 876 882 969 990 969
r 924 966 999 1002 981|g 945 954 999 999 990|g 804 807 957 957 951|r 783 807 867 879 972|g 786 789 867 867 987
r 762 789 801 816 981|r 798 798 864 888 987|g 804 810 864 864 987|r 795 810 822 825 993|g 804 804 822 843 990
g 771 774 807 813 990|r 774 774 795 813 993|r 777 792 810 819 984|g 768 783 810 810 996|g 696 714 786 786 981
g 687 690 717 717 990|r 690 690 753 777 981|g 711 711 753 756 984|r 690 711 735 738 990|g 726 726 735 774 993
g 711 711 729 744 993|r 711 711 759 759 993|r 744 756 804 804 990|r 774 801 831 834 990|g 780 780 831 831 993
g 702 702 783 783 984|r 648 702 735 735 978|r 693 732 735 735 990|g 693 714 738 738 990
`.trim().split(/[|\n]/).map(s => s.split(' '));

const PRICE_SHIFT = -297;
const VOLUME_SHIFT = 603;
const PLOT_BOTTOM = 1608;
const pitch = 7.23;
const box = (x, y, w, h) => `M${x} ${y}h${w}v${h}h${-w}z`;
const shapes = { g: '', r: '' };
const volumes = { g: '', r: '' };

candles.forEach(([dir, high, top, bottom, low, vol], i) => {
  const x = Math.round(4 + i * pitch);
  const shift = PRICE_SHIFT;
  shapes[dir] += box(x, +high + shift, 1, low - high) + box(x - 2, +top + shift, 5, bottom - top);
  const volTop = +vol + VOLUME_SHIFT;
  volumes[dir] += box(x - 3, volTop, 6, PLOT_BOTTOM - volTop);
});

let grid = '';
for (let i = 0; i < 12; i++) grid += box(0, 36 + Math.round(i * 40.2) * 3, 860, 3);
grid += box(0, 1464, 860, 3);
[148, 322, 495, 668, 842].forEach(x => { grid += box(x, 0, 1, PLOT_BOTTOM); });

document.getElementById('plot').innerHTML =
  `<path class="grid" d="${grid}"/>` +
  `<path class="sep" d="${box(0, 1380, 860, 3)}"/>` +
  `<path class="up vol" d="${volumes.g}"/><path class="down vol" d="${volumes.r}"/>` +
  `<path class="up" d="${shapes.g}"/><path class="down" d="${shapes.r}"/>` +
  `<path class="now" d="M0 418.500H860"/>`;
```
